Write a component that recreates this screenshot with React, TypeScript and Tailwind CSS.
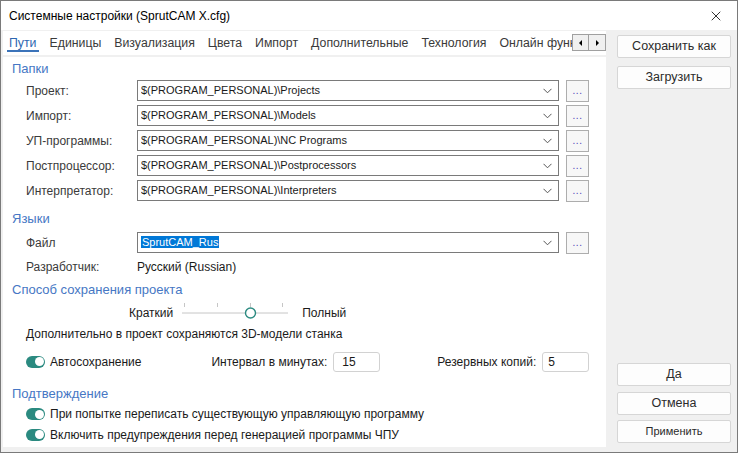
import { X } from 'lucide-react';

const paths = [
  { label: 'Проект:', value: '$(PROGRAM_PERSONAL)\\Projects' },
  { label: 'Импорт:', value: '$(PROGRAM_PERSONAL)\\Models' },
  { label: 'УП-программы:', value: '$(PROGRAM_PERSONAL)\\NC Programs' },
  { label: 'Постпроцессор:', value: '$(PROGRAM_PERSONAL)\\Postprocessors' },
  { label: 'Интерпретатор:', value: '$(PROGRAM_PERSONAL)\\Interpreters' },
];

const tabs = ['Пути', 'Единицы', 'Визуализация', 'Цвета', 'Импорт', 'Дополнительные', 'Технология', 'Онлайн функции'];

function Chevron() {
  return (
    <svg width="9" height="6" viewBox="0 0 9 6" className="shrink-0">
      <path d="M0.5 0.8 L4.5 4.8 L8.5 0.8" fill="none" stroke="#555" strokeWidth="1" />
    </svg>
  );
}

function Combo({ children }: { children: React.ReactNode }) {
  return (
    <div className="w-[422px] h-[21px] border border-[#7a7a7a] bg-white flex items-center pl-[3px] pr-[6px]">
      <div className="flex-1 text-[11px] text-[#1a1a1a] truncate">{children}</div>
      <Chevron />
    </div>
  );
}

function Dots() {
  return (
    <div className="w-[23px] h-[22px] ml-[7px] border border-[#adadad] bg-[#f7f7f7] flex items-end justify-center pb-[5px]">
      <span className="text-[10px] leading-none text-[#4b3fb8] tracking-[0.5px]">...</span>
    </div>
  );
}

function Toggle() {
  return (
    <div className="w-[19px] h-[12px] rounded-full bg-[#2b8a80] flex items-center justify-end pr-[1.5px] shrink-0">
      <div className="w-[9px] h-[9px] rounded-full bg-white" />
    </div>
  );
}

function Section({ children, className }: { children: React.ReactNode; className: string }) {
  return <div className={`pl-[9px] flex items-center text-[13px] text-[#4677c4] ${className}`}>{children}</div>;
}

function SideButton({ children, small }: { children: React.ReactNode; small?: boolean }) {
  return (
    <div
      className={`h-[23px] border border-[#d6d6d6] rounded-[2px] bg-[#fdfdfd] flex items-center justify-center text-[#2b2b2b] ${
        small ? 'text-[11px]' : 'text-[12.5px]'
      }`}
    >
      {children}
    </div>
  );
}

export default function App() {
  return (
    <div className="w-[738px] h-[453px] border border-[#7a7a7a] bg-[#f0f0f0] flex flex-col overflow-hidden font-['Liberation_Sans',Arial,sans-serif]">
      <div className="h-[29px] bg-white flex items-center justify-between pl-[8px] pr-[13px] shrink-0">
        <span className="text-[12px] text-black">Системные настройки (SprutCAM X.cfg)</span>
        <X className="w-[16px] h-[16px] text-black" strokeWidth={1.2} />
      </div>

      <div className="flex flex-1 min-h-0 pt-[1px]">
        <div className="w-[603px] ml-[2px] flex flex-col">
          <div className="h-[24px] bg-white flex items-center relative overflow-hidden">
            <div className="flex items-center gap-[13px] pl-[6px] text-[12.3px] text-[#3a3a3a] whitespace-nowrap">
              {tabs.map((t, i) => (
                <div key={t} className={`relative h-[24px] flex items-center ${i === 0 ? 'text-[#2d66b0]' : ''}`}>
                  {t}
                  {i === 0 && <div className="absolute left-[-2px] right-[-2px] bottom-[3px] h-[2px] bg-[#3b73b9]" />}
                </div>
              ))}
            </div>
            <div className="absolute right-0 top-[3px] h-[17px] flex bg-white">
              <div className="w-[17px] h-[17px] border border-[#a0a0a0] bg-[#f0f0f0] flex items-center justify-center">
                <div className="w-0 h-0 border-y-[3px] border-y-transparent border-r-[3px] border-r-black" />
              </div>
              <div className="w-[17px] h-[17px] border border-l-0 border-[#a0a0a0] bg-[#f0f0f0] flex items-center justify-center">
                <div className="w-0 h-0 border-y-[3px] border-y-transparent border-l-[3px] border-l-black" />
              </div>
            </div>
          </div>

          <div className="mt-[2px] h-[390px] bg-white flex flex-col pt-[2px] text-[12px] text-[#3a3a3a]">
            <Section className="h-[20px]">Папки</Section>
            <div className="flex flex-col mt-[1px]">
              {paths.map((p) => (
                <div key={p.label} className="h-[25px] flex items-start pl-[23px]">
                  <div className="w-[111px] h-[21px] flex items-center">{p.label}</div>
                  <Combo>{p.value}</Combo>
                  <Dots />
                </div>
              ))}
            </div>

            <Section className="h-[27px]">Языки</Section>
            <div className="h-[25px] flex items-start pl-[23px]">
              <div className="w-[111px] h-[21px] flex items-center">Файл</div>
              <Combo>
                <span className="bg-[#0078d7] text-white px-[1px]">SprutCAM_Rus</span>
              </Combo>
              <Dots />
            </div>
            <div className="h-[20px] flex items-center pl-[23px]">
              <div className="w-[111px]">Разработчик:</div>
              <div className="text-[#1a1a1a]">Русский (Russian)</div>
            </div>

            <Section className="h-[24px] pt-[2px]">Способ сохранения проекта</Section>
            <div className="h-[24px] flex items-center pl-[126px] text-[#1a1a1a]">
              <span>Краткий</span>
              <svg width="112" height="24" viewBox="0 0 112 24" className="ml-[7px]">
                <line x1="2" y1="12" x2="108" y2="12" stroke="#c6c6c6" strokeWidth="1" />
                <line x1="4.5" y1="2" x2="4.5" y2="6" stroke="#c6c6c6" strokeWidth="1" />
                <line x1="37.5" y1="2" x2="37.5" y2="6" stroke="#c6c6c6" strokeWidth="1" />
                <line x1="70.5" y1="2" x2="70.5" y2="6" stroke="#c6c6c6" strokeWidth="1" />
                <line x1="102.5" y1="2" x2="102.5" y2="6" stroke="#c6c6c6" strokeWidth="1" />
                <circle cx="70.5" cy="12" r="5" fill="white" stroke="#2b8a80" strokeWidth="1.4" />
              </svg>
              <span className="ml-[10px]">Полный</span>
            </div>
            <div className="h-[17px] flex items-center pl-[23px] text-[#1a1a1a]">
              Дополнительно в проект сохраняются 3D-модели станка
            </div>

            <div className="h-[23px] mt-[8px] flex items-center pl-[23px] text-[#1a1a1a]">
              <Toggle />
              <span className="ml-[5px]">Автосохранение</span>
              <span className="ml-[70px]">Интервал в минутах:</span>
              <div className="ml-[6px] w-[47px] h-[20px] border border-[#d2d2d2] rounded-[3px] flex items-center pl-[8px]">15</div>
              <span className="ml-[57px]">Резервных копий:</span>
              <div className="ml-[6px] w-[47px] h-[20px] border border-[#d2d2d2] rounded-[3px] flex items-center pl-[5px]">5</div>
            </div>

            <Section className="h-[20px] mt-[11px]">Подтверждение</Section>
            <div className="h-[20px] flex items-center pl-[23px] text-[#1a1a1a]">
              <Toggle />
              <span className="ml-[5px]">При попытке переписать существующую управляющую программу</span>
            </div>
            <div className="h-[21px] flex items-center pl-[23px] text-[#1a1a1a]">
              <Toggle />
              <span className="ml-[5px]">Включить предупреждения перед генерацией программы ЧПУ</span>
            </div>
          </div>
        </div>

        <div className="flex-1 flex flex-col pl-[11px] pr-[6px] pt-[4px] pb-[9px]">
          <SideButton>Сохранить как</SideButton>
          <div className="mt-[8px]">
            <SideButton>Загрузить</SideButton>
          </div>
          <div className="flex-1" />
          <SideButton>Да</SideButton>
          <div className="mt-[6px]">
            <SideButton>Отмена</SideButton>
          </div>
          <div className="mt-[5px]">
            <SideButton small>Применить</SideButton>
          </div>
        </div>
      </div>
    </div>
  );
}
